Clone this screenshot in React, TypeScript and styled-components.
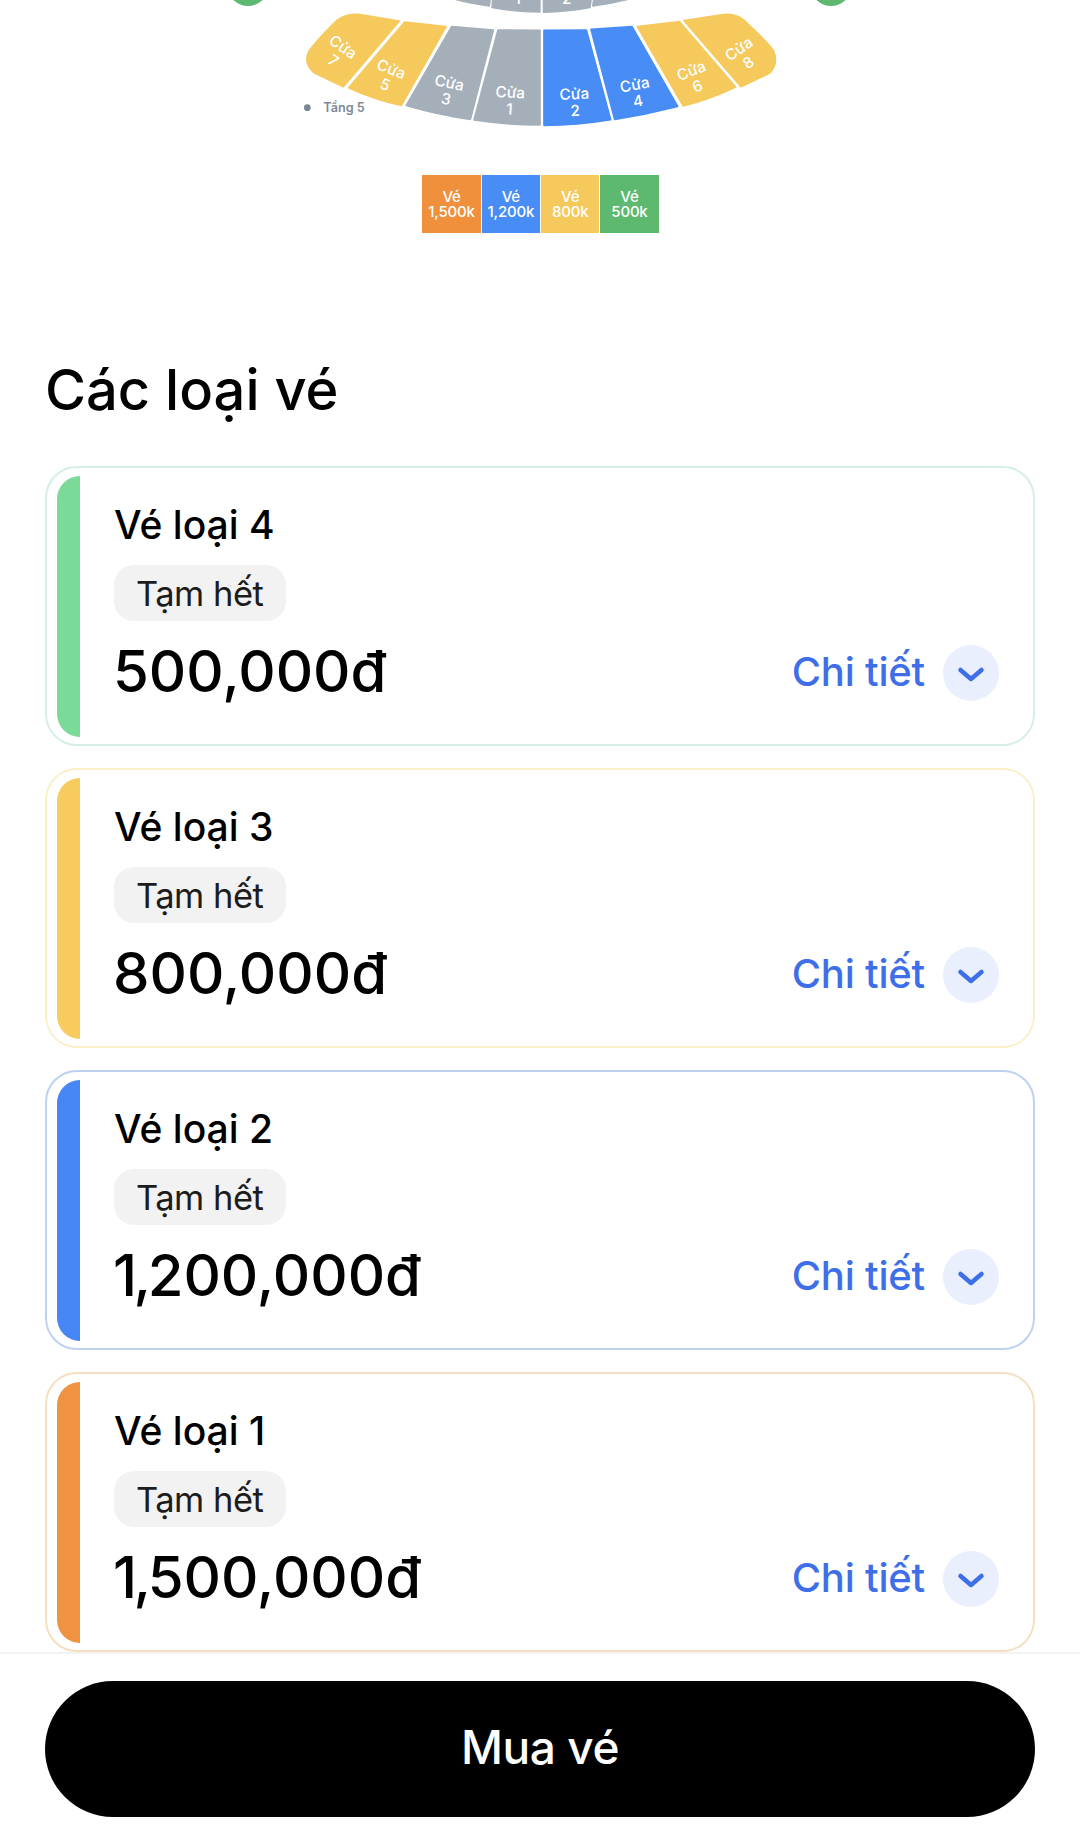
import React from "react";
import styled, { createGlobalStyle } from "styled-components";

const GlobalStyle = createGlobalStyle`
    html, body {
        margin: 0;
        padding: 0;
        background: #ffffff;
        font-family: "Inter", "Liberation Sans", sans-serif;
    }
`;

const Page = styled.div`
    width: 1080px;
    height: 1830px;
    display: flex;
    flex-direction: column;
    overflow: hidden;
    background: #ffffff;
`;

const MapSvg = styled.svg`
    display: block;
    width: 1080px;
    height: 150px;
    flex: none;
`;

const Legend = styled.div`
    display: flex;
    gap: 1px;
    justify-content: center;
    margin: 25px 0 0 1px;
`;

const LegendCell = styled.div<{ $color: string }>`
    width: 58.3px;
    height: 58px;
    display: flex;
    flex-direction: column;
    align-items: center;
    justify-content: center;
    background: ${(p) => p.$color};
    color: #ffffff;
    font-size: 15px;
    font-weight: 500;
    line-height: 15px;
    letter-spacing: -0.2px;
`;

const LegendLine = styled.div`
    height: 15px;
`;

const Section = styled.section`
    flex: 1;
    padding: 123px 45px 0;
`;

const Heading = styled.h2`
    margin: 0 0 42px;
    font-size: 56px;
    line-height: 68px;
    font-weight: 500;
    letter-spacing: 0;
    color: #000000;
`;

const TicketList = styled.div`
    display: flex;
    flex-direction: column;
    gap: 22px;
`;

const Card = styled.div<{ $border: string }>`
    box-sizing: border-box;
    height: 280px;
    display: flex;
    padding: 8px 9px 7px 10px;
    border: 2px solid ${(p) => p.$border};
    border-radius: 32px;
    background: #ffffff;
`;

const Bar = styled.div<{ $color: string }>`
    width: 23px;
    flex: none;
    border-radius: 24px 0 0 24px;
    background: ${(p) => p.$color};
`;

const CardBody = styled.div`
    flex: 1;
    display: flex;
    flex-direction: column;
    align-items: flex-start;
    padding: 25px 25px 0 34px;
`;

const TicketName = styled.div`
    font-size: 39px;
    line-height: 48px;
    font-weight: 500;
    letter-spacing: 0;
    color: #000000;
`;

const Pill = styled.div`
    margin-top: 16px;
    height: 56px;
    padding: 0 23px 0 22px;
    display: flex;
    align-items: center;
    border-radius: 20px;
    background: #f2f2f2;
    font-size: 34.5px;
    letter-spacing: -0.5px;
    color: #1c1c1c;
`;

const PriceRow = styled.div`
    align-self: stretch;
    margin-top: 15px;
    display: flex;
    align-items: center;
    justify-content: space-between;
`;

const Price = styled.div`
    margin-left: -1px;
    font-size: 58px;
    line-height: 70px;
    font-weight: 500;
    letter-spacing: 0;
    color: #000000;
`;

const PriceLead = styled.span`
    letter-spacing: -3.5px;
`;

const DetailLink = styled.div`
    display: flex;
    align-items: center;
    gap: 18px;
    font-size: 40px;
    font-weight: 500;
    letter-spacing: -0.2px;
    color: #3f6fe8;
`;

const ChevronCircle = styled.span`
    width: 56px;
    height: 56px;
    margin-top: 3px;
    border-radius: 50%;
    display: flex;
    align-items: center;
    justify-content: center;
    background: #eaeffd;
`;

const Footer = styled.div`
    height: 179px;
    box-sizing: border-box;
    flex: none;
    padding: 27px 45px 0;
    border-top: 2px solid #f3f3f3;
    background: #ffffff;
`;

const BuyButton = styled.button`
    width: 100%;
    height: 136px;
    padding: 0 0 4px;
    border: none;
    border-radius: 68px;
    background: #000000;
    color: #ffffff;
    font-family: inherit;
    font-size: 46px;
    font-weight: 500;
    letter-spacing: -0.4px;
`;

const YELLOW = "#f6c95c";
const GREY = "#a5afba";
const BLUE = "#478df5";

// coordinates are in 3x units of the page, origin at x = 280
const sectors = [
    { fill: YELLOW, d: "M190 260 L105 220 Q72 195 84 160 Q92 140 170 62 Q200 38 240 44 L358 63 Z", label: ["Cửa", "7"], x: 180, y: 154, rotate: 35 },
    { fill: YELLOW, d: "M374 66 L498 80 L364 316 Q280 298 206 263 Z", label: ["Cửa", "5"], x: 328, y: 222, rotate: 22 },
    { fill: GREY, d: "M515 80 L640 90 L571 358 Q470 343 379 316 Z", label: ["Cửa", "3"], x: 505, y: 264, rotate: 12 },
    { fill: GREY, d: "M654 90 L780 91 L780 375 Q680 375 582 360 Z", label: ["Cửa", "1"], x: 690, y: 293, rotate: 3 },
    { fill: BLUE, d: "M792 91 L919 90 L992 359 Q890 376 792 376 Z", label: ["Cửa", "2"], x: 884, y: 298, rotate: -3 },
    { fill: BLUE, d: "M933 88 L1056 80 L1193 319 Q1100 343 1004 358 Z", label: ["Cửa", "4"], x: 1067, y: 270, rotate: -11 },
    { fill: YELLOW, d: "M1072 80 L1198 65 L1367 261 Q1290 298 1210 318 Z", label: ["Cửa", "6"], x: 1240, y: 227, rotate: -22 },
    { fill: YELLOW, d: "M1212 62 L1335 43 Q1370 40 1393 62 Q1468 132 1480 152 Q1497 190 1468 220 L1383 260 Z", label: ["Cửa", "8"], x: 1386, y: 160, rotate: -35 },
];

const upperSectors = [
    "M525 -10 L632 -10 L628 18 Q570 10 525 -2 Z",
    "M638 -10 L780 -10 L780 36 Q705 36 636 23 Z",
    "M790 -10 L935 -10 L930 23 Q860 36 790 37 Z",
    "M942 -10 L1050 -10 L1045 -2 Q990 12 938 18 Z",
];

function StadiumMap() {
    return (
        <MapSvg viewBox="0 0 3240 450">
            <circle cx="744" cy="-42" r="60" fill="#5db96f" />
            <circle cx="2493" cy="-42" r="60" fill="#5db96f" />
            <g transform="translate(840 0)">
                {upperSectors.map((d) => (
                    <path key={d} d={d} fill={GREY} stroke={GREY} strokeWidth="4" strokeLinejoin="round" />
                ))}
                <text x="713" y="12" fontSize="46" fontWeight="500" fill="#ffffff" textAnchor="middle">1</text>
                <text x="860" y="12" fontSize="46" fontWeight="500" fill="#ffffff" textAnchor="middle">2</text>
                {sectors.map((s) => (
                    <g key={s.label[1]}>
                        <path d={s.d} fill={s.fill} stroke={s.fill} strokeWidth="5" strokeLinejoin="round" />
                        <g
                            transform={`translate(${s.x} ${s.y}) rotate(${s.rotate})`}
                            fill="#ffffff"
                            fontSize="46"
                            fontWeight="500"
                            textAnchor="middle"
                        >
                            <text x="0" y="0">{s.label[0]}</text>
                            <text x="0" y="50">{s.label[1]}</text>
                        </g>
                    </g>
                ))}
                <circle cx="82" cy="323" r="10" fill="#7a8694" />
                <text x="130" y="335" fontSize="38" fontWeight="600" fill="#7f8a97">Tầng 5</text>
            </g>
        </MapSvg>
    );
}

const legend = [
    { color: "#f0903c", price: "1,500k" },
    { color: "#478df5", price: "1,200k" },
    { color: "#f6c95c", price: "800k" },
    { color: "#5db96f", price: "500k" },
];

const tickets = [
    { name: "Vé loại 4", lead: "", price: "500,000đ", color: "#7bda97", border: "#d5f0e3" },
    { name: "Vé loại 3", lead: "", price: "800,000đ", color: "#f7cb5e", border: "#fcefcb" },
    { name: "Vé loại 2", lead: "1,", price: "200,000đ", color: "#4786f5", border: "#bdd2f0" },
    { name: "Vé loại 1", lead: "1,", price: "500,000đ", color: "#f09340", border: "#f6dfc0" },
];

function App() {
    return (
        <Page>
            <GlobalStyle />
            <StadiumMap />
            <Legend>
                {legend.map((item) => (
                    <LegendCell key={item.price} $color={item.color}>
                        <LegendLine>Vé</LegendLine>
                        <LegendLine>{item.price}</LegendLine>
                    </LegendCell>
                ))}
            </Legend>
            <Section>
                <Heading>Các loại vé</Heading>
                <TicketList>
                    {tickets.map((ticket) => (
                        <Card key={ticket.name} $border={ticket.border}>
                            <Bar $color={ticket.color} />
                            <CardBody>
                                <TicketName>{ticket.name}</TicketName>
                                <Pill>Tạm hết</Pill>
                                <PriceRow>
                                    <Price>
                                        <PriceLead>{ticket.lead}</PriceLead>
                                        {ticket.price}
                                    </Price>
                                    <DetailLink>
                                        Chi tiết
                                        <ChevronCircle>
                                            <svg width="28" height="20" viewBox="0 0 28 20" fill="none">
                                                <path d="M3.5 7 L14 16 L24.5 7" stroke="#3f6fe8" strokeWidth="4.5" strokeLinecap="round" strokeLinejoin="round" />
                                            </svg>
                                        </ChevronCircle>
                                    </DetailLink>
                                </PriceRow>
                            </CardBody>
                        </Card>
                    ))}
                </TicketList>
            </Section>
            <Footer>
                <BuyButton>Mua vé</BuyButton>
            </Footer>
        </Page>
    );
}

export default App;
